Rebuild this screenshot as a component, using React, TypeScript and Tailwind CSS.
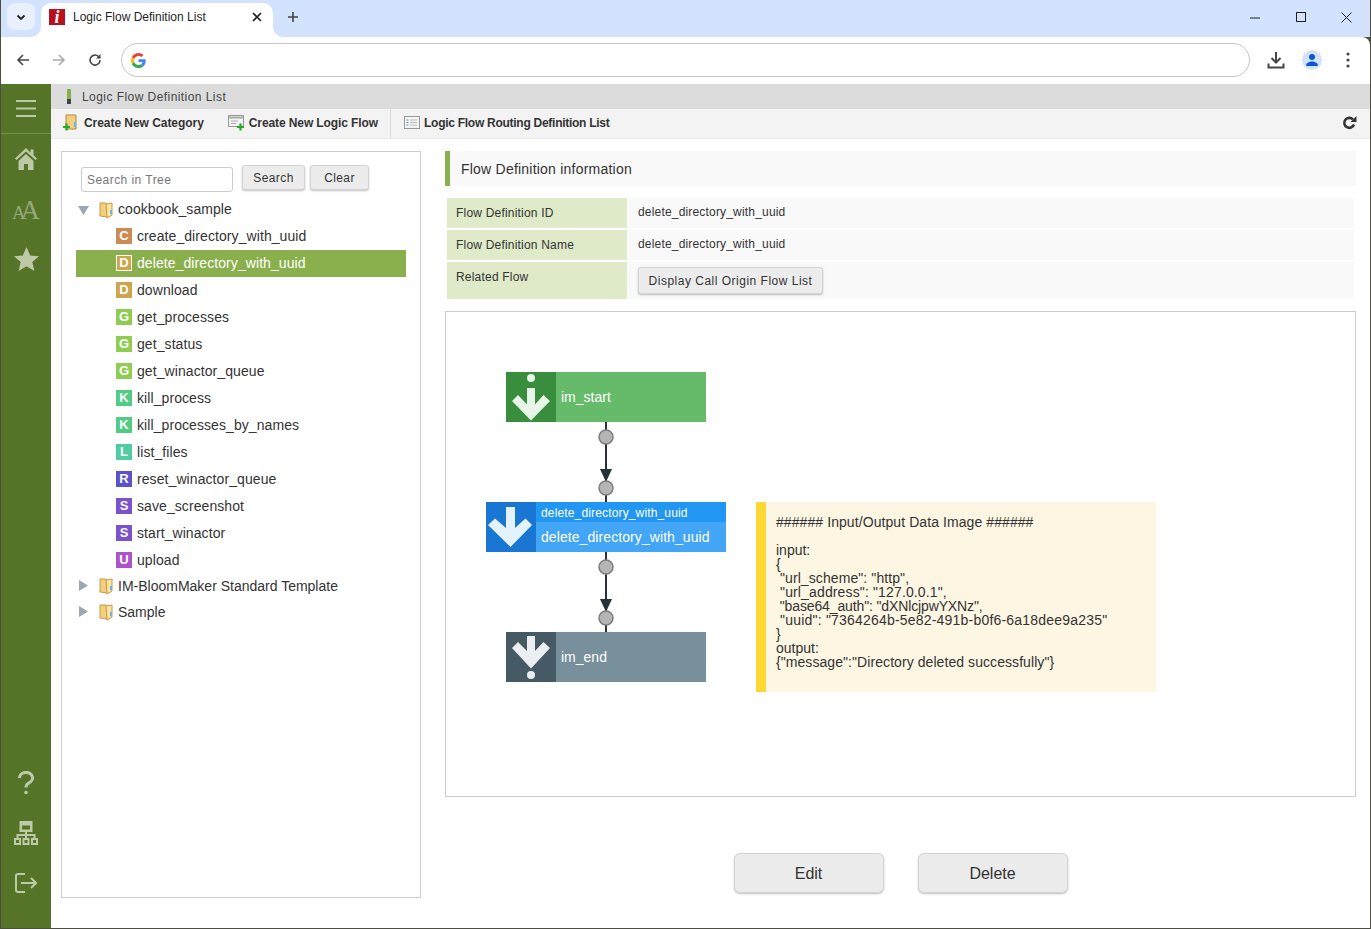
const font = "font-['Liberation_Sans',Arial,sans-serif]"

const treeItems = [
  { name: 'create_directory_with_uuid', letter: 'C', color: 'bg-[#cc8b52]' },
  { name: 'delete_directory_with_uuid', letter: 'D', color: 'bg-[#cca64d]', selected: true },
  { name: 'download', letter: 'D', color: 'bg-[#cca64d]' },
  { name: 'get_processes', letter: 'G', color: 'bg-[#8ecc52]' },
  { name: 'get_status', letter: 'G', color: 'bg-[#8ecc52]' },
  { name: 'get_winactor_queue', letter: 'G', color: 'bg-[#8ecc52]' },
  { name: 'kill_process', letter: 'K', color: 'bg-[#52cc85]' },
  { name: 'kill_processes_by_names', letter: 'K', color: 'bg-[#52cc85]' },
  { name: 'list_files', letter: 'L', color: 'bg-[#52cca3]' },
  { name: 'reset_winactor_queue', letter: 'R', color: 'bg-[#5952cc]' },
  { name: 'save_screenshot', letter: 'S', color: 'bg-[#7c52cc]' },
  { name: 'start_winactor', letter: 'S', color: 'bg-[#7c52cc]' },
  { name: 'upload', letter: 'U', color: 'bg-[#ac52cc]' },
]

const noteLines = [
  { text: '###### Input/Output Data Image ######', track: 'tracking-[0.08px]' },
  { text: ' ', track: '' },
  { text: 'input:', track: '' },
  { text: '{', track: '' },
  { text: ' "url_scheme": "http",', track: 'tracking-[0.09px]' },
  { text: ' "url_address": "127.0.0.1",', track: 'tracking-[0.14px]' },
  { text: ' "base64_auth": "dXNlcjpwYXNz",', track: '-tracking-[0.13px]' },
  { text: ' "uuid": "7364264b-5e82-491b-b0f6-6a18dee9a235"', track: 'tracking-[0.2px]' },
  { text: '}', track: '' },
  { text: 'output:', track: '' },
  { text: '{"message":"Directory deleted successfully"}', track: 'tracking-[0.07px]' },
]

function Folder() {
  return (
    <svg width="16" height="18" viewBox="0 0 16 18" className="shrink-0">
      <path d="M2 2h6l1 1v13l-7-1z" fill="#f3cf7e" stroke="#c79a45" strokeWidth="1" />
      <path d="M8 3l6-1v12l-5 3z" fill="#fbe3a4" stroke="#c79a45" strokeWidth="1" />
      <rect x="12" y="9" width="2" height="4" fill="#6db5e0" />
    </svg>
  )
}

function Triangle({ open }: { open?: boolean }) {
  return (
    <svg width="12" height="12" viewBox="0 0 12 12" className="shrink-0">
      <path d={open ? 'M0 2h11L5.500 11z' : 'M1 0l9 5.500L1 11z'} fill="#9ca6b4" />
    </svg>
  )
}

function FolderRow({ name, open, className, track }: { name: string; open?: boolean; className: string; track: string }) {
  return (
    <div className={`flex items-center text-[14px] text-[#333] ${className}`}>
      <span className="w-[22px] pl-[2px]"><Triangle open={open} /></span>
      <Folder />
      <span className={`ml-[4px] ${track}`}>{name}</span>
    </div>
  )
}

function TreeRow({ name, letter, color, selected }: { name: string; letter: string; color: string; selected?: boolean }) {
  return (
    <div className={`h-[27px] flex items-center pl-[40px] text-[14px] ${selected ? 'bg-[#8ab04e] text-white' : 'text-[#333]'}`}>
      <span className={`w-[16px] h-[16px] -mt-[2px] flex items-center justify-center text-white text-[13px] font-bold ${color} ${selected ? 'border border-white' : ''}`}>{letter}</span>
      <span className="ml-[5px] tracking-[0.08px]">{name}</span>
    </div>
  )
}

function Btn({ label, className }: { label: string; className: string }) {
  return (
    <button className={`bg-[#ececec] border border-[#d4d4d4] rounded-[3px] shadow-[0_1px_2px_rgba(0,0,0,0.25)] text-[#333] ${className}`}>
      {label}
    </button>
  )
}

function InfoRow({ label, children, className, labelClass }: { label: string; children: React.ReactNode; className: string; labelClass: string }) {
  return (
    <div className={`flex ${className}`}>
      <div className={`w-[180px] bg-[#deeac8] pl-[9px] text-[12px] tracking-[0.2px] text-[#333] ${labelClass}`}>{label}</div>
      <div className="flex-1 ml-[1px] mr-[2px] bg-[#f9f9f9] pl-[10px] text-[12px] tracking-[0.18px] text-[#333] flex items-center">{children}</div>
    </div>
  )
}

function ArrowIcon({ variant }: { variant: 'start' | 'mid' | 'end' }) {
  return (
    <svg width="50" height="50" viewBox="0 0 50 50">
      {variant === 'start' && <circle cx="25" cy="6" r="4" fill="#e8f5e9" />}
      {variant === 'start' && <path d="M21 16h8v16.500l8.500-9.500 6.500 6L25 48.500 6 29l6-6 9 9.500z" fill="#e8f5e9" />}
      {variant === 'mid' && <path d="M20 5h9v21l10.500-9.500L46 23 24.500 45 2 23l7-6.500L20 26z" fill="#e3f2fd" />}
      {variant === 'end' && <path d="M21 4h8v15l8.500-9 6.500 6L25 36.500 6 16l6-6 9 9z" fill="#eceff1" />}
      {variant === 'end' && <circle cx="25" cy="43" r="4" fill="#eceff1" />}
    </svg>
  )
}

function Connector({ className }: { className: string }) {
  return (
    <svg width="16" height="80" viewBox="0 0 16 80" className={`absolute ${className}`}>
      <line x1="8" y1="0" x2="8" y2="80" stroke="#263238" strokeWidth="2" />
      <path d="M2 47h12l-6 13z" fill="#263238" />
      <circle cx="8" cy="15" r="7" fill="#b5b5b5" stroke="#7d7d7d" strokeWidth="1.500" />
      <circle cx="8" cy="66" r="7" fill="#b5b5b5" stroke="#7d7d7d" strokeWidth="1.500" />
    </svg>
  )
}

export default function App() {
  return (
    <div className={`w-[1371px] h-[929px] bg-[#4d4d40] pl-[1px] pr-[1px] pb-[1px] flex flex-col overflow-hidden ${font}`}>
      {/* Browser tab strip */}
      <div className="h-[37px] bg-[#d3e3fd] flex items-start shrink-0 relative">
        <div className="mt-[3px] ml-[6px] w-[28px] h-[27px] rounded-[8px] bg-[#e9f0fd] flex items-center justify-center">
          <svg width="12" height="12" viewBox="0 0 12 12"><path d="M2.500 4.500L6 8l3.500-3.500" fill="none" stroke="#1f1f1f" strokeWidth="1.800" /></svg>
        </div>
        <div className="relative ml-[6px] mt-[3px] w-[232px] h-[34px] bg-white rounded-t-[10px] flex items-start pl-[8px] pt-[6px]">
          <svg width="10" height="10" viewBox="0 0 10 10" className="absolute -left-[10px] bottom-0"><path d="M10 0v10H0a10 10 0 0 0 10-10z" fill="#fff" /></svg>
          <svg width="10" height="10" viewBox="0 0 10 10" className="absolute -right-[10px] bottom-0"><path d="M0 0v10h10A10 10 0 0 1 0 0z" fill="#fff" /></svg>
          <span className="w-[16px] h-[16px] bg-[#b8101c] text-white italic font-bold text-[18px] leading-[16px] text-center font-['Liberation_Serif',serif]">i</span>
          <span className="ml-[8px] text-[12px] leading-[16px] text-[#1f1f1f]">Logic Flow Definition List</span>
          <svg width="10" height="10" viewBox="0 0 10 10" className="absolute right-[11px] top-[9px]"><path d="M1 1l8 8M9 1L1 9" stroke="#1f1f1f" strokeWidth="1.600" /></svg>
        </div>
        <svg width="12" height="12" viewBox="0 0 12 12" className="ml-[14px] mt-[11px]"><path d="M6 1v10M1 6h10" stroke="#444" strokeWidth="1.600" /></svg>
        <div className="ml-auto flex items-center mt-[8px] mr-[18px] gap-[35px] h-[18px]">
          <svg width="11" height="11" viewBox="0 0 11 11"><path d="M0 6h10" stroke="#1f1f1f" strokeWidth="1" /></svg>
          <svg width="10" height="10" viewBox="0 0 10 10"><rect x="0.500" y="0.500" width="9" height="9" fill="none" stroke="#1f1f1f" strokeWidth="1" /></svg>
          <svg width="11" height="11" viewBox="0 0 11 11"><path d="M0.500 0.500l10 10M10.500 0.500l-10 10" stroke="#1f1f1f" strokeWidth="1" /></svg>
        </div>
      </div>

      {/* Browser toolbar */}
      <div className="h-[47px] bg-white rounded-tr-[8px] flex items-center shrink-0 pb-[1px]">
        <svg width="16" height="16" viewBox="0 0 16 16" className="ml-[14px]"><path d="M14 8H3M8 3L3 8l5 5" fill="none" stroke="#474747" strokeWidth="1.600" /></svg>
        <svg width="16" height="16" viewBox="0 0 16 16" className="ml-[20px]"><path d="M2 8h11M8 3l5 5-5 5" fill="none" stroke="#aaa" strokeWidth="1.600" /></svg>
        <svg width="16" height="16" viewBox="0 0 16 16" className="ml-[20px]"><path d="M13 8a5 5 0 1 1-1.500-3.500L13 6" fill="none" stroke="#474747" strokeWidth="1.600" /><path d="M13.500 2v4.500H9z" fill="#474747" /></svg>
        <div className="ml-[18px] w-[1129px] h-[34px] border border-[#c7c7c7] rounded-full flex items-center pl-[9px]">
          <svg width="15" height="15" viewBox="0 0 48 48">
            <path fill="#EA4335" d="M24 9.500c3.500 0 6.700 1.200 9.200 3.600l6.900-6.900C35.900 2.400 30.500 0 24 0 14.600 0 6.500 5.400 2.600 13.200l8 6.200C12.500 13.700 17.800 9.500 24 9.500z" />
            <path fill="#4285F4" d="M47 24.500c0-1.600-.1-3.100-.4-4.500H24v9h12.900c-.6 3-2.200 5.500-4.700 7.200l7.700 6c4.500-4.200 7.100-10.300 7.100-17.700z" />
            <path fill="#FBBC05" d="M10.500 28.600c-.5-1.500-.8-3-.8-4.600s.3-3.200.8-4.600l-8-6.200C.9 16.500 0 20.100 0 24s.9 7.500 2.600 10.800l7.900-6.200z" />
            <path fill="#34A853" d="M24 48c6.500 0 11.900-2.100 15.900-5.800l-7.700-6c-2.200 1.400-4.900 2.300-8.200 2.300-6.200 0-11.500-4.200-13.400-9.900l-8 6.200C6.500 42.600 14.600 48 24 48z" />
          </svg>
        </div>
        <svg width="18" height="18" viewBox="0 0 18 18" className="ml-[17px]"><path d="M9 1v10M4.500 7L9 11.500 13.500 7M1.500 12.500V16.500h15v-4" fill="none" stroke="#474747" strokeWidth="2" /></svg>
        <span className="ml-[17px] w-[20px] h-[20px] rounded-full bg-[#d3e3fd] flex items-center justify-center">
          <svg width="14" height="14" viewBox="0 0 14 14"><circle cx="7" cy="4" r="3" fill="#0b57d0" /><path d="M1 13c0-3 3-4.500 6-4.500s6 1.500 6 4.500z" fill="#0b57d0" /></svg>
        </span>
        <svg width="4" height="16" viewBox="0 0 4 16" className="ml-[24px]"><circle cx="2" cy="2" r="1.600" fill="#474747" /><circle cx="2" cy="8" r="1.600" fill="#474747" /><circle cx="2" cy="14" r="1.600" fill="#474747" /></svg>
      </div>

      {/* Page */}
      <div className="flex-1 flex min-h-0 bg-white">
        <aside className="w-[50px] bg-[#567428] flex flex-col items-center text-[#bccaa8] shrink-0">
          <div className="w-full h-[50px] border-b border-[#75904c] flex items-center justify-center">
            <svg width="20" height="17" viewBox="0 0 20 17"><path d="M0 1h20M0 8.500h20M0 16h20" stroke="#bccaa8" strokeWidth="2" /></svg>
          </div>
          <div className="h-[50px] flex items-center">
            <svg width="22" height="22" viewBox="0 0 22 22" fill="#bccaa8">
              <path d="M11 0L0 10.500l1.500 1.500L11 3.500l9.500 8.500 1.500-1.500-3.500-3.300V1.500h-3v3.200z" />
              <path d="M3.500 13L11 6l7.500 7v9H13v-6H9v6H3.500z" />
            </svg>
          </div>
          <div className="h-[50px] flex items-center">
            <div className="text-[27px] first-letter:text-[19px] tracking-[-5px] pr-[5px] pt-[2px] leading-none text-[#96a97a] font-['Liberation_Serif',serif]">AA</div>
          </div>
          <div className="h-[50px] flex items-center">
            <svg width="25" height="24" viewBox="0 0 25 24" fill="#bccaa8"><path d="M12.500 0l3.700 8.500 8.800.7-6.700 5.800 2.100 9-7.900-4.800-7.900 4.800 2.100-9L0 9.200l8.800-.7z" /></svg>
          </div>
          <div className="mt-auto h-[50px] flex items-center">
            <svg width="16" height="24" viewBox="0 0 16 24" fill="none" stroke="#bccaa8" strokeWidth="3">
              <path d="M1.500 7a6.500 5.500 0 1 1 9.500 4.800c-2 1.200-3 2.300-3 4.700" />
              <circle cx="8" cy="21.500" r="1.800" fill="#bccaa8" stroke="none" />
            </svg>
          </div>
          <div className="h-[50px] flex items-center">
            <svg width="24" height="24" viewBox="0 0 24 24" fill="none" stroke="#bccaa8" strokeWidth="2">
              <rect x="6.500" y="1" width="11" height="9" fill="#bccaa8" />
              <rect x="8" y="4.500" width="8" height="4" fill="#567428" stroke="none" />
              <path d="M12 10v4M3.500 18v-4h17v4M12 14v4" />
              <rect x="1" y="18" width="5" height="5" />
              <rect x="9.500" y="18" width="5" height="5" />
              <rect x="18" y="18" width="5" height="5" />
            </svg>
          </div>
          <div className="h-[50px] mb-[20px] flex items-center">
            <svg width="22" height="20" viewBox="0 0 22 20" fill="none" stroke="#bccaa8" strokeWidth="2">
              <path d="M10 1H3a2 2 0 0 0-2 2v14a2 2 0 0 0 2 2h7" />
              <path d="M6 10h15M16 5l5 5-5 5" />
            </svg>
          </div>
        </aside>

        <div className="flex-1 flex flex-col min-w-0">
          <div className="h-[25px] bg-[#dcdcdc] flex items-center pl-[16px] shrink-0">
            <span className="w-[4px] h-[15px] bg-[linear-gradient(#8ab04e_0_66%,#444_66%)]" />
            <span className="ml-[11px] text-[12px] tracking-[0.44px] text-[#444]">Logic Flow Definition List</span>
          </div>

          <div className="h-[30px] pb-[2px] bg-[#f3f3f3] border-b border-[#e8e8e8] flex items-center text-[12px] font-bold text-[#333] shrink-0">
            <div className="flex items-center h-[30px] pl-[11px] pr-[12px] border-r border-[#dcdcdc]">
              <svg width="17" height="17" viewBox="0 0 17 17">
                <path d="M4 1h10v14H4z" fill="#f0cf83" stroke="#b48a3c" />
                <path d="M12 8h2v5h-2z" fill="#6db5e0" />
                <path d="M1 13h7M4.500 9.500v7" stroke="#27a82c" strokeWidth="2.200" />
              </svg>
              <span className="ml-[5px] -tracking-[0.05px]">Create New Category</span>
              <svg width="17" height="17" viewBox="0 0 17 17" className="ml-[24px]">
                <rect x="0.500" y="1.500" width="15" height="11" fill="#f4f4f4" stroke="#999" />
                <path d="M1 3.500h14" stroke="#aaa" strokeWidth="2" />
                <path d="M3 7h7M3 9.500h5" stroke="#aaa" />
                <path d="M9 13h7M12.500 9.500v7" stroke="#27a82c" strokeWidth="2.200" />
              </svg>
              <span className="ml-[4px] -tracking-[0.1px]">Create New Logic Flow</span>
            </div>
            <div className="flex items-center pl-[13px]">
              <svg width="16" height="13" viewBox="0 0 16 13">
                <rect x="0.500" y="0.500" width="15" height="12" fill="#f4f4f4" stroke="#999" />
                <path d="M2.500 4h2M2.500 6.500h2M2.500 9h2" stroke="#6a8fc0" />
                <path d="M6 4h7M6 6.500h7M6 9h7" stroke="#bbb" />
              </svg>
              <span className="ml-[4px] -tracking-[0.27px]">Logic Flow Routing Definition List</span>
            </div>
            <svg width="15" height="15" viewBox="0 0 15 15" className="ml-auto mr-[13px]">
              <path d="M12 9.500a5 5 0 1 1-1-5" fill="none" stroke="#333" strokeWidth="2.600" />
              <path d="M14.500 1v6h-6z" fill="#333" />
            </svg>
          </div>

          <div className="flex-1 flex pt-[12px] pl-[10px] pb-[30px] pr-[14px] min-h-0">
            {/* Tree */}
            <div className="w-[360px] border border-[#ccc] pl-[14px] pt-[13px] shrink-0">
              <div className="flex items-start pl-[5px]">
                <input
                  placeholder="Search in Tree"
                  className="w-[152px] h-[25px] mt-[2px] border border-[#ccc] rounded-[3px] px-[5px] text-[12px] tracking-[0.45px] placeholder:text-[#777] bg-white"
                />
                <Btn label="Search" className="ml-[9px] w-[63px] h-[25px] text-[12px] tracking-[0.4px]" />
                <Btn label="Clear" className="ml-[5px] w-[59px] h-[25px] text-[12px] tracking-[0.4px]" />
              </div>
              <div className="w-[330px] mt-[4px]">
                <FolderRow name="cookbook_sample" open className="h-[27px]" track="tracking-[0.07px]" />
                {treeItems.map((item, i) => (
                  <TreeRow key={i} {...item} />
                ))}
                <FolderRow name="IM-BloomMaker Standard Template" className="h-[26px] -mt-[1px]" track="" />
                <FolderRow name="Sample" className="h-[26px]" track="" />
              </div>
            </div>

            {/* Detail */}
            <div className="ml-[24px] flex-1 flex flex-col min-w-0">
              <div className="h-[35px] border-l-[5px] border-[#8ab04e] bg-[#f9f9f9] pl-[11px] pt-[2px] flex items-center text-[14px] tracking-[0.22px] text-[#333]">
                Flow Definition information
              </div>
              <div className="mt-[12px] pl-[2px] flex flex-col gap-[2px]">
                <InfoRow label="Flow Definition ID" className="h-[30px]" labelClass="flex items-center">
                  <span className="-mt-[2px]">delete_directory_with_uuid</span>
                </InfoRow>
                <InfoRow label="Flow Definition Name" className="h-[30px]" labelClass="flex items-center">
                  <span className="-mt-[2px]">delete_directory_with_uuid</span>
                </InfoRow>
                <InfoRow label="Related Flow" className="h-[37px]" labelClass="pt-[6px]">
                  <Btn label="Display Call Origin Flow List" className="w-[185px] h-[27px] pt-[1px] text-[12px] tracking-[0.5px]" />
                </InfoRow>
              </div>

              {/* Flow diagram */}
              <div className="relative mt-[12px] h-[486px] border border-[#ccc] shrink-0">
                <Connector className="left-[152px] top-[110px]" />
                <Connector className="left-[152px] top-[240px]" />
                <div className="absolute left-[60px] top-[60px] w-[200px] h-[50px] flex bg-[#66bb6a] text-white">
                  <span className="w-[50px] h-[50px] bg-[#388e3c]"><ArrowIcon variant="start" /></span>
                  <span className="ml-[5px] self-center text-[14px]">im_start</span>
                </div>
                <div className="absolute left-[40px] top-[190px] w-[240px] h-[50px] flex text-white">
                  <span className="w-[50px] h-[50px] bg-[#1976d2]"><ArrowIcon variant="mid" /></span>
                  <div className="flex-1 flex flex-col">
                    <div className="h-[20px] bg-[#2196f3] pl-[5px] pt-[1px] text-[12px] leading-[20px] tracking-[0.15px]">delete_directory_with_uuid</div>
                    <div className="h-[30px] bg-[#42a5f5] pl-[5px] text-[14px] leading-[30px] tracking-[0.08px]">delete_directory_with_uuid</div>
                  </div>
                </div>
                <div className="absolute left-[60px] top-[320px] w-[200px] h-[50px] flex bg-[#78909c] text-white">
                  <span className="w-[50px] h-[50px] bg-[#455a64]"><ArrowIcon variant="end" /></span>
                  <span className="ml-[5px] self-center text-[14px]">im_end</span>
                </div>
                <div className="absolute left-[310px] top-[190px] w-[400px] h-[190px] border-l-[10px] border-[#fdd835] bg-[#fdf6e3] pl-[10px] pt-[13px] text-[14px] leading-[14px] text-[#333] whitespace-pre">
                  {noteLines.map((line, i) => (
                    <div key={i} className={line.track}>{line.text}</div>
                  ))}
                </div>
              </div>

              <div className="flex justify-center gap-[34px] mt-[56px]">
                <button className="w-[150px] h-[40px] pt-[1px] bg-[#ececec] border border-[#d4d4d4] rounded-[6px] shadow-[0_1px_2px_rgba(0,0,0,0.25)] text-[16px] text-[#333]">Edit</button>
                <button className="w-[150px] h-[40px] pt-[1px] bg-[#ececec] border border-[#d4d4d4] rounded-[6px] shadow-[0_1px_2px_rgba(0,0,0,0.25)] text-[16px] text-[#333]">Delete</button>
              </div>
            </div>
          </div>
        </div>
      </div>
    </div>
  )
}
